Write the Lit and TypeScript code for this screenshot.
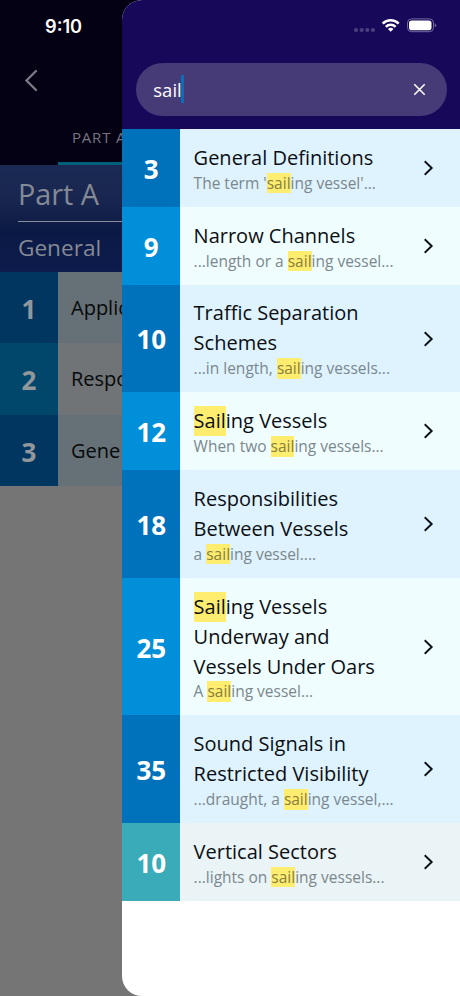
import { LitElement, html, css, svg } from "lit";
import { customElement } from "lit/decorators.js";

interface Hit { n: string; title: string[]; sub: string; tone: string; }

const HITS: Hit[] = [
  { n: "3", title: ["General Definitions"], sub: "The term 'sailing vessel'...", tone: "a" },
  { n: "9", title: ["Narrow Channels"], sub: "...length or a sailing vessel...", tone: "b" },
  { n: "10", title: ["Traffic Separation", "Schemes"], sub: "...in length, sailing vessels...", tone: "a" },
  { n: "12", title: ["Sailing Vessels"], sub: "When two sailing vessels...", tone: "b" },
  { n: "18", title: ["Responsibilities", "Between Vessels"], sub: "a sailing vessel....", tone: "a" },
  { n: "25", title: ["Sailing Vessels", "Underway and", "Vessels Under Oars"], sub: "A sailing vessel...", tone: "b" },
  { n: "35", title: ["Sound Signals in", "Restricted Visibility"], sub: "...draught, a sailing vessel,...", tone: "a" },
  { n: "10", title: ["Vertical Sectors"], sub: "...lights on sailing vessels...", tone: "c" },
];

const mark = (text: string) =>
  text.split(/(sail)/i).map((p) => (/^sail$/i.test(p) ? html`<mark>${p}</mark>` : p));

@customElement("search-hit")
export class SearchHit extends LitElement {
  static properties = { hit: { attribute: false } };
  declare hit: Hit;
  static styles = css`
    :host { display: block; }
    .row { display: flex; }
    .num { width: 58px; flex: none; display: flex; align-items: center; justify-content: center;
      color: #fff; font-weight: 700; font-size: 26px; padding-top: 2px; box-sizing: border-box; }
    .body { flex: 1; display: flex; align-items: center; padding: 13.9px 24px 13.5px 13.3px; }
    .text { flex: 1; }
    .title { font-size: 20px; line-height: 29.9px; color: #0b0f14; white-space: nowrap; }
    .sub { font-size: 15.5px; line-height: 20.5px; color: #7b878d; white-space: nowrap; }
    mark { display: inline-block; background: #ffed70; color: inherit; }
    .sub mark { color: #877e3c; }
    .a .num { background: #0072bc; } .a .body { background: #dff3ff; }
    .b .num { background: #008fd8; } .b .body { background: #f0fdff; }
    .c .num { background: #3aabb8; } .c .body { background: #eaf3f5; }
    svg { flex: none; display: block; }
  `;
  render() {
    const h = this.hit;
    return html`<div class="row ${h.tone}">
      <div class="num">${h.n}</div>
      <div class="body">
        <div class="text">
          ${h.title.map((t) => html`<div class="title">${mark(t)}</div>`)}
          <div class="sub">${mark(h.sub)}</div>
        </div>
        <svg width="16" height="16" viewBox="0 0 16 16" fill="none" stroke="#0b0f14" stroke-width="1.9">
          <path d="M4.7 1.2 L11.7 8 L4.7 14.8" />
        </svg>
      </div>
    </div>`;
  }
}

@customElement("app-root")
export class AppRoot extends LitElement {
  static styles = css`
    :host { display: block; position: relative; width: 460px; height: 996px; overflow: hidden;
      background: #757575; font-family: "Open Sans", "Noto Sans", sans-serif; }
    .back { display: flex; flex-direction: column; height: 100%; width: 150px; overflow: hidden; }
    .bar { height: 165px; background: #050114; display: flex; flex-direction: column; flex: none; }
    .nav { height: 111px; padding: 69px 0 0 24px; box-sizing: border-box; }
    .tab { margin-left: 58px; height: 54px; box-sizing: border-box; padding: 14px 0 0 14px;
      border-bottom: 3px solid #005f79; border-top-left-radius: 2px; color: #77747f; font-size: 15px;
      line-height: 24px; letter-spacing: .8px; white-space: nowrap; }
    .hero { height: 107px; flex: none; background: linear-gradient(#1b2a54 0, #18264f 35%, #0b1a44 60%, #0d1b4d 100%);
      color: #858a94; padding-left: 18px; box-sizing: border-box; font-weight: 370; }
    .hero .h { height: 56px; line-height: 57px; font-size: 28.8px; border-bottom: 1px solid #8a8e98; }
    .hero .s { line-height: 52px; font-size: 22.6px; }
    .rule { display: flex; height: 71.3px; flex: none; line-height: 74px; }
    .rule b { flex: none; width: 58px; text-align: center; color: #91979b; font-size: 26px; }
    .rule span { flex: 1; line-height: 72.5px; padding-left: 13px; font-size: 20px; color: #06090b; }
    .d b { background: #00365f; } .d span { background: #667177; }
    .l b { background: #00476b; } .l span { background: #707477; }
    .drawer { position: absolute; left: 122.3px; top: 0; right: 0; bottom: 0; background: #fff;
      border-radius: 20px 0 0 20px; overflow: hidden; }
    .head { height: 129px; background: #170859; box-sizing: border-box; padding: 62.5px 13.5px 0; }
    .field { height: 53.5px; border-radius: 27px; background: #463a77; display: flex; align-items: center;
      padding: 0 20.5px 0 17.5px; color: #fff; font-size: 18.5px; }
    .caret { width: 2.5px; height: 28px; background: #0072bc; margin: -1px 0 0 -.5px; }
    .grow { flex: 1; }
    .time { position: absolute; left: 45px; top: 13.5px; font: 600 18.2px/24px Inter, sans-serif; color: #fff; }
    .status { position: absolute; left: 352px; top: 16px; }
    svg { display: block; }
  `;
  render() {
    return html`
      <div class="back">
        <div class="bar">
          <div class="nav">
            <svg width="14" height="24" viewBox="0 0 14 24" fill="none" stroke="#7a7882" stroke-width="2.4" stroke-linecap="round">
              <path d="M12 2 L2.5 11.5 L12 21" />
            </svg>
          </div>
          <div class="tab">PART A</div>
        </div>
        <div class="hero"><div class="h">Part A</div><div class="s">General</div></div>
        <div class="rule d"><b>1</b><span>Applic</span></div>
        <div class="rule l"><b>2</b><span>Respo</span></div>
        <div class="rule d"><b>3</b><span>Gene</span></div>
      </div>
      <div class="drawer">
        <div class="head">
          <div class="field">
            <span>sail</span><i class="caret"></i><span class="grow"></span>
            <svg width="13" height="13" viewBox="0 0 13 13" stroke="#fff" stroke-width="1.6">
              <path d="M1.3 1.3 L11.7 11.7 M11.7 1.3 L1.3 11.7" />
            </svg>
          </div>
        </div>
        ${HITS.map((h) => html`<search-hit .hit=${h}></search-hit>`)}
      </div>
      <div class="time">9:10</div>
      <svg class="status" width="90" height="18" viewBox="352 16 90 18">
        ${[356, 361.7, 367.3, 373].map((x) => svg`<circle cx=${x} cy="30" r="2.1" fill="#4a3f7c" />`)}
        <g fill="none" stroke="#fff" stroke-width="2.5">
          <path d="M382.7 23.6 A11.3 11.3 0 0 1 398.7 23.6" />
          <path d="M385.8 26.8 A7 7 0 0 1 395.6 26.8" />
        </g>
        <path d="M390.7 31.8 L387.9 29 A4 4 0 0 1 393.5 29 Z" fill="#fff" />
        <rect x="407.5" y="18.9" width="26" height="12.8" rx="4" fill="none" stroke="#746b9b" />
        <rect x="409" y="20.4" width="22.5" height="9.8" rx="2.8" fill="#fff" />
        <path d="M434.8 23.2 q1.4 .7 1.4 2 t-1.4 2 z" fill="#746b9b" />
      </svg>
    `;
  }
}
